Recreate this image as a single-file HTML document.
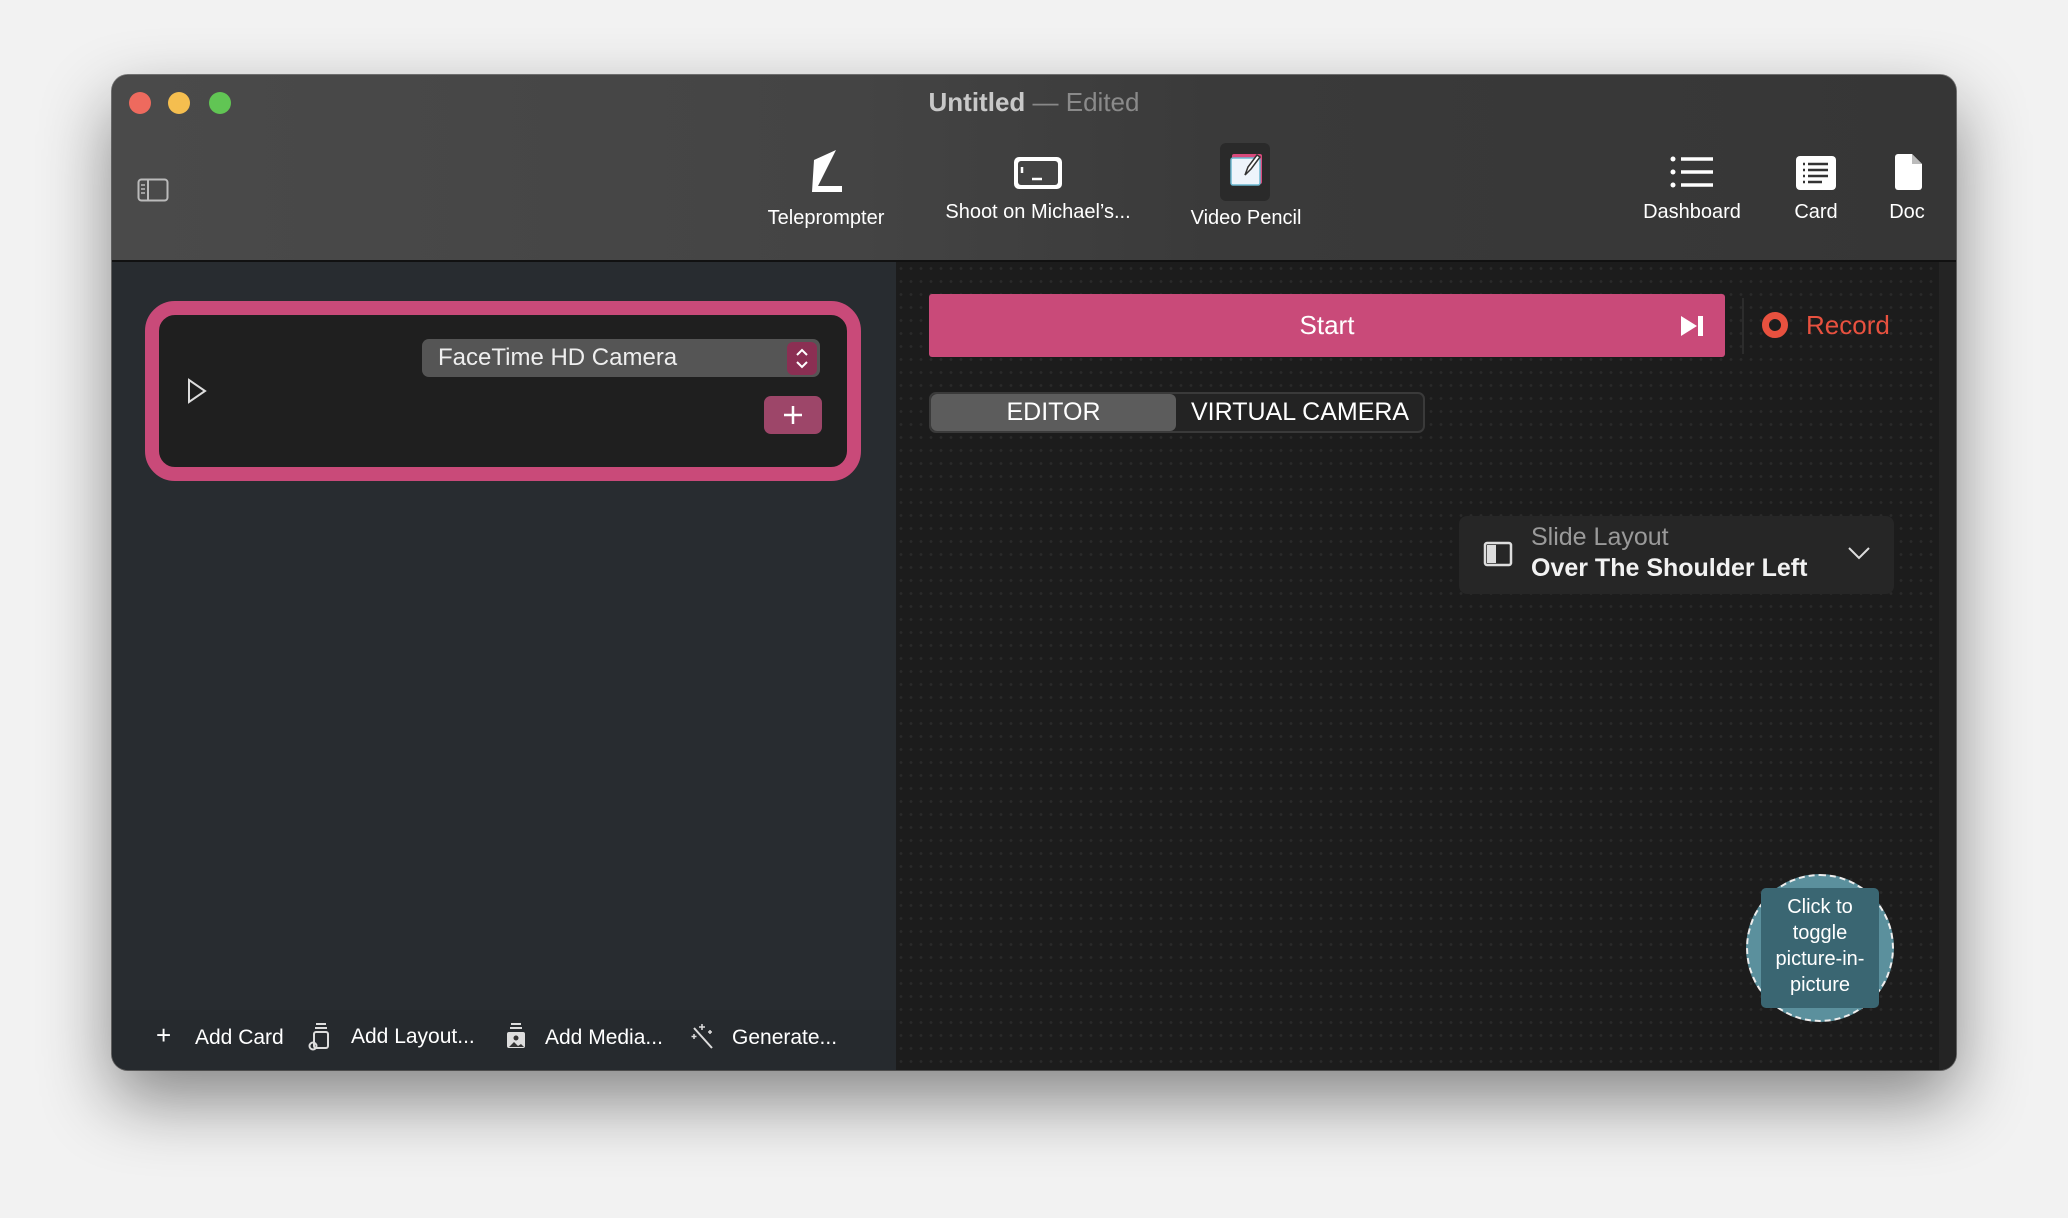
<!DOCTYPE html>
<html><head><meta charset="utf-8"><style>
*{box-sizing:border-box;margin:0;padding:0}
body{width:2068px;height:1218px;background:#f2f2f2;position:relative;overflow:hidden;font-family:"Liberation Sans",sans-serif;}
.win{position:absolute;left:112px;top:75px;width:1844px;height:995px;border-radius:16px;overflow:hidden;background:#1e1e1e;box-shadow:0 30px 70px rgba(0,0,0,.45),0 0 0 1px rgba(0,0,0,.5);}
.tb{position:absolute;left:0;top:0;width:100%;height:187px;background:linear-gradient(90deg,#4a4a4a 0,#444 40%,#3a3a3a 60%,#363636 100%);border-bottom:2px solid #111;}
.dot{position:absolute;top:17px;width:22px;height:22px;border-radius:50%}
.title{position:absolute;left:0;width:100%;top:12px;text-align:center;font-size:26px;font-weight:bold;color:#c8c8c8}
.title span{color:#8a8a8a;font-weight:normal}
.ti{position:absolute;color:#fff;font-size:20px;text-align:center;transform:translateX(-50%);white-space:nowrap}
.side{position:absolute;left:0;top:187px;width:784px;height:808px;background:#282c30}
.right{position:absolute;left:784px;top:187px;width:1060px;height:808px;background-color:#1c1c1c;background-image:radial-gradient(circle,#2a2a2a 1.2px,transparent 1.6px);background-size:10px 13px}
.abs{position:absolute}
</style></head><body>
<div class="win">
 <div class="tb">
  <div class="dot" style="left:17px;background:#ee6a5e"></div>
  <div class="dot" style="left:56px;background:#f5be4f"></div>
  <div class="dot" style="left:97px;background:#61c554"></div>
  <div class="title">Untitled <span style="color:#888">—</span> <span>Edited</span></div>
  <svg class="abs" style="left:25px;top:103px" width="32" height="24" viewBox="0 0 32 24"><rect x="1.5" y="1.5" width="29" height="21" rx="3" fill="none" stroke="#bbb" stroke-width="2"/><line x1="11" y1="2" x2="11" y2="22" stroke="#bbb" stroke-width="2"/><path d="M4 7h4M4 11h4M4 15h4" stroke="#bbb" stroke-width="1.5"/></svg>
  <svg class="abs" style="left:696px;top:73px" width="36" height="48" viewBox="0 0 36 48"><path d="M6 12 L28 2 L10 38 L34 38 L34 44 L4 44 Z" fill="#fff"/></svg>
  <div class="ti" style="left:714px;top:132px">Teleprompter</div>
  <svg class="abs" style="left:900px;top:80px" width="52" height="38" viewBox="0 0 52 38"><rect x="2" y="2" width="48" height="32" rx="5" fill="#fff"/><rect x="6" y="6" width="40" height="24" rx="3" fill="#444"/><path d="M10 12v6M20 24h10" stroke="#fff" stroke-width="2.5"/></svg>
  <div class="ti" style="left:926px;top:126px">Shoot on Michael’s...</div>
  <div class="abs" style="left:1108px;top:68px;width:50px;height:58px;background:#2a2a2a;border-radius:6px"></div>
  <svg class="abs" style="left:1117px;top:76px" width="36" height="36" viewBox="0 0 36 36"><rect x="3" y="3" width="30" height="30" rx="2" fill="#d94a7c"/><rect x="2" y="7" width="29" height="27" rx="2" fill="#eef4fb" stroke="#6bb7d0" stroke-width="1.5"/><path d="M16 24l3-8 9-12 3 2-9 12z" fill="#fff" stroke="#333" stroke-width="1.5"/></svg>
  <div class="ti" style="left:1134px;top:132px">Video Pencil</div>
  <svg class="abs" style="left:1557px;top:80px" width="46" height="36" viewBox="0 0 46 36"><circle cx="4" cy="4" r="2.5" fill="#fff"/><circle cx="4" cy="17" r="2.5" fill="#fff"/><circle cx="4" cy="30" r="2.5" fill="#fff"/><path d="M12 4h32M12 17h32M12 30h32" stroke="#fff" stroke-width="3.5"/></svg>
  <div class="ti" style="left:1580px;top:126px">Dashboard</div>
  <svg class="abs" style="left:1683px;top:80px" width="42" height="36" viewBox="0 0 42 36"><rect x="1" y="1" width="40" height="34" rx="4" fill="#fff"/><path d="M8 9h2M13 9h20M8 15h2M13 15h20M8 21h2M13 21h20M8 27h2M13 27h14" stroke="#333" stroke-width="2.5"/></svg>
  <div class="ti" style="left:1704px;top:126px">Card</div>
  <svg class="abs" style="left:1783px;top:78px" width="28" height="38" viewBox="0 0 28 38"><path d="M3 1h14l10 10v23a3 3 0 0 1-3 3H3a3 3 0 0 1-3-3V4a3 3 0 0 1 3-3z" fill="#fff"/><path d="M17 1v10h10" fill="#bbb"/></svg>
  <div class="ti" style="left:1795px;top:126px">Doc</div>
 </div>
 <div class="side">
  <div class="abs" style="left:33px;top:39px;width:716px;height:180px;border:14px solid #c94a79;border-radius:30px;background:#1f1f1f"></div>
  <svg class="abs" style="left:74px;top:116px" width="22" height="26" viewBox="0 0 22 26"><path d="M3 2L19 13L3 24Z" fill="none" stroke="#ddd" stroke-width="2"/></svg>
  <div class="abs" style="left:310px;top:77px;width:398px;height:38px;background:#555;border-radius:7px;color:#eee;font-size:24px;line-height:38px;padding-left:16px">FaceTime HD Camera</div>
  <div class="abs" style="left:675px;top:80px;width:30px;height:33px;background:#8b2f53;border-radius:6px"><svg width="30" height="33" viewBox="0 0 30 33"><path d="M10 13l5-5 5 5M10 20l5 5 5-5" fill="none" stroke="#fff" stroke-width="2"/></svg></div>
  <div class="abs" style="left:652px;top:134px;width:58px;height:38px;background:#9d4669;border-radius:7px"><svg width="58" height="38" viewBox="0 0 58 38"><path d="M29 10v18M20 19h18" stroke="#fff" stroke-width="2.5"/></svg></div>
  <div class="abs" style="left:0;top:748px;width:784px;height:60px;background:#262a2e"></div>
  <div class="abs" style="left:0;top:764px;width:784px;font-size:21px;color:#fff;white-space:nowrap">
   <span class="abs" style="left:44px;top:-6px;font-size:26px;font-weight:300">+</span>
   <span class="abs" style="left:83px;top:0">Add Card</span>
   <svg class="abs" style="left:196px;top:-4px" width="24" height="30" viewBox="0 0 24 30"><path d="M8 2h10M7 6h12" stroke="#ddd" stroke-width="2"/><rect x="6" y="10" width="14" height="16" rx="2" fill="none" stroke="#ddd" stroke-width="2"/><circle cx="5" cy="24" r="3.5" fill="none" stroke="#ddd" stroke-width="2"/></svg>
   <span class="abs" style="left:239px;top:-1px">Add Layout...</span>
   <svg class="abs" style="left:392px;top:-4px" width="24" height="30" viewBox="0 0 24 30"><path d="M7 2h10M6 6h12" stroke="#ddd" stroke-width="2"/><rect x="3" y="10" width="18" height="16" rx="2" fill="#ddd"/><circle cx="12" cy="16" r="2.5" fill="#333"/><path d="M5 25l5-5 4 4 3-2 3 3" fill="#333"/></svg>
   <span class="abs" style="left:433px;top:0">Add Media...</span>
   <svg class="abs" style="left:578px;top:-4px" width="26" height="30" viewBox="0 0 26 30"><path d="M4 6l18 20" stroke="#ddd" stroke-width="2"/><path d="M12 2v6M9 5h6M4 12v5M1.5 14.5h5M20 8v4M18 10h4" stroke="#ddd" stroke-width="1.5"/></svg>
   <span class="abs" style="left:620px;top:0">Generate...</span>
  </div>
 </div>
 <div class="right">
  <div class="abs" style="right:0;top:0;width:17px;height:808px;background:#242424"></div>
  <div class="abs" style="left:33px;top:32px;width:796px;height:63px;background:#c94a79;border-radius:3px;color:#fff;font-size:26px;line-height:63px;text-align:center">Start</div>
  <svg class="abs" style="left:783px;top:52px" width="28" height="24" viewBox="0 0 28 24"><path d="M2 2L18 12L2 22Z" fill="#fff"/><rect x="19" y="2" width="5" height="20" fill="#fff"/></svg>
  <div class="abs" style="left:846px;top:36px;width:2px;height:56px;background:#2c2c2c"></div>
  <div class="abs" style="left:866px;top:50px;width:26px;height:26px;border-radius:50%;border:7px solid #e8513f"></div>
  <div class="abs" style="left:910px;top:48px;color:#e8513f;font-size:26px">Record</div>
  <div class="abs" style="left:33px;top:130px;width:496px;height:41px;background:#232323;border:2px solid #3a3a3a;border-radius:7px"></div>
  <div class="abs" style="left:35px;top:132px;width:245px;height:37px;background:#5c5c5c;border-radius:6px;color:#fff;font-size:25px;line-height:37px;text-align:center">EDITOR</div>
  <div class="abs" style="left:295px;top:132px;color:#fff;font-size:25px;line-height:37px">VIRTUAL CAMERA</div>
  <div class="abs" style="left:563px;top:254px;width:435px;height:78px;background:#262626;border-radius:8px"></div>
  <svg class="abs" style="left:587px;top:279px" width="30" height="26" viewBox="0 0 30 26"><rect x="2" y="2" width="26" height="22" rx="2" fill="none" stroke="#ddd" stroke-width="2.5"/><rect x="4" y="4" width="9" height="18" fill="#ddd"/></svg>
  <div class="abs" style="left:635px;top:261px;color:#9a9a9a;font-size:25px">Slide Layout</div>
  <div class="abs" style="left:635px;top:292px;color:#f2f2f2;font-size:25px;font-weight:bold">Over The Shoulder Left</div>
  <svg class="abs" style="left:951px;top:283px" width="24" height="16" viewBox="0 0 24 16"><path d="M2 3l10 10 10-10" fill="none" stroke="#ddd" stroke-width="2"/></svg>
  <div class="abs" style="left:850px;top:612px;width:148px;height:148px;border-radius:50%;background:#5b909d;border:2px dashed #eee"></div>
  <div class="abs" style="left:865px;top:626px;width:118px;height:120px;background:#3a6672;border-radius:5px;color:#fff;font-size:20px;line-height:26px;text-align:center;padding-top:6px">Click to<br>toggle<br>picture-in-<br>picture</div>
 </div>
</div>
</body></html>
